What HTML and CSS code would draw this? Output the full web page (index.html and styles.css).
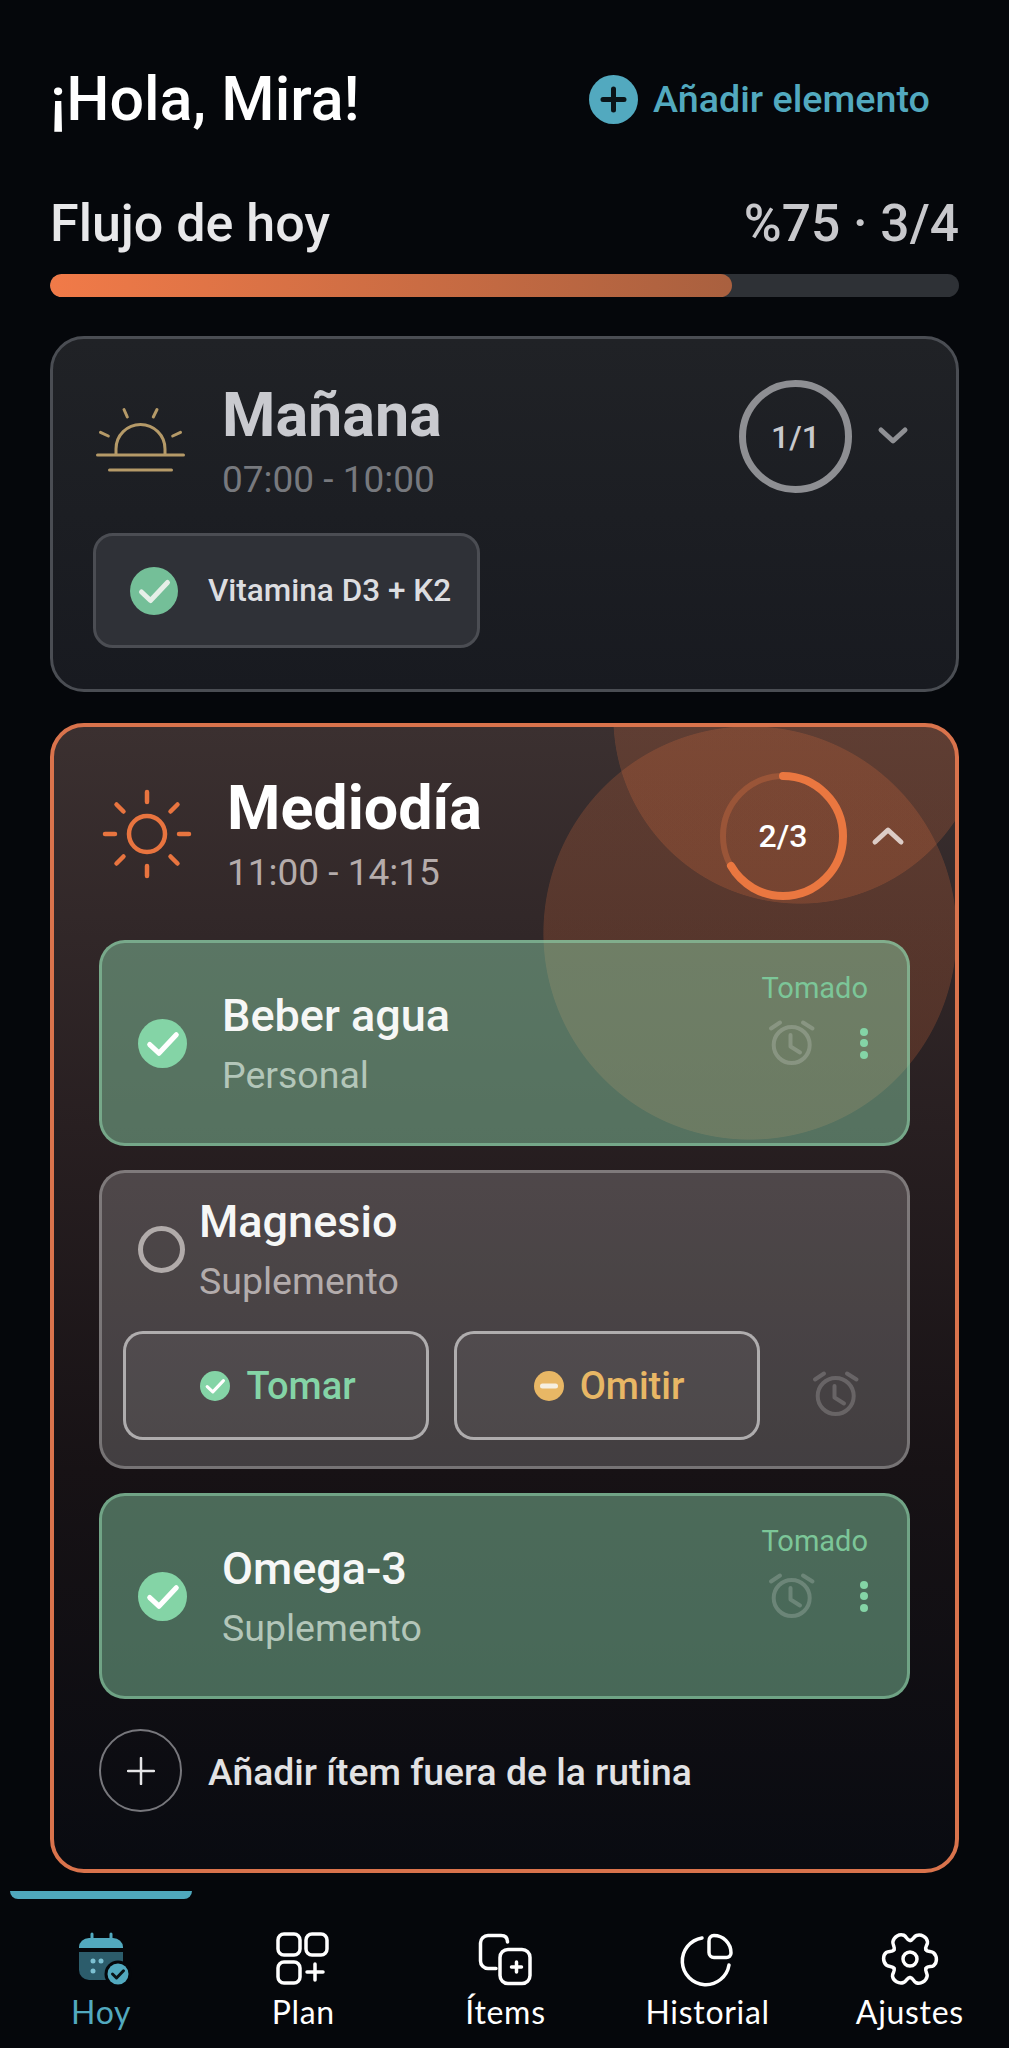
FILE: index.html
```html
<!DOCTYPE html>
<html lang="es">
<head>
<meta charset="utf-8">
<title>Flujo de hoy</title>
<link rel="stylesheet" href="styles.css">
</head>
<body>
<svg class="defs" width="0" height="0" aria-hidden="true">
  <symbol id="check" viewBox="0 0 48 48"><circle cx="24" cy="24" r="24" fill="currentColor"/><path d="M11.5 25 20.5 33.5 37.5 15.5" fill="none" stroke="var(--tick)" stroke-width="5" stroke-linecap="round" stroke-linejoin="round"/></symbol>
  <symbol id="alarm" viewBox="0 0 50 50"><g fill="none" stroke="currentColor" stroke-width="4" stroke-linecap="round" stroke-linejoin="round"><circle cx="24.7" cy="27" r="18"/><path d="M23.5 17V28.500L33 34.500M4 10.500 13 4.500M36 4.500 45.500 10.500"/></g></symbol>
</svg>
<div class="screen">
  <main class="main">
    <header class="top">
      <h1 class="hello">¡Hola, Mira!</h1>
      <div class="add">
        <svg class="add-ic" viewBox="0 0 49 49"><circle cx="24.5" cy="24.5" r="24.5" fill="#52a9bf"/><path d="M24.5 14V35M14 24.5H35" stroke="#0a1418" stroke-width="5" stroke-linecap="round"/></svg>
        <span>Añadir elemento</span>
      </div>
    </header>
    <div class="flow-row">
      <span class="flow-title">Flujo de hoy</span>
      <span class="flow-val">%75 · 3/4</span>
    </div>
    <div class="bar"><div class="bar-fill" style="width:75%"></div></div>

    <section class="card morning">
      <div class="head">
        <svg class="sunrise" viewBox="0 0 96 70"><g fill="none" stroke="#b59a68" stroke-width="3" stroke-linecap="round"><path d="M4.500 49H90.500M16.500 64H78.500M23 49V43a24.500 24.500 0 0 1 49 0V49M31 3.500 34.300 11M64 3.500 60.300 11M7.500 26.300 15.300 30M87.500 26.300 79.700 30"/></g></svg>
        <div class="titles">
          <h2 class="slot-title dim">Mañana</h2>
          <div class="slot-time dim">07:00 - 10:00</div>
        </div>
        <div class="ring-wrap">
          <div class="ring small">
            <svg viewBox="0 0 113 113"><circle cx="56.5" cy="56.5" r="53" fill="none" stroke="#8e8f93" stroke-width="7"/></svg>
            <span class="ring-txt dim">1/1</span>
          </div>
          <svg class="chev" viewBox="0 0 40 40"><path d="M8 13 20 24 32 13" fill="none" stroke="#8f9094" stroke-width="5" stroke-linecap="round" stroke-linejoin="round"/></svg>
        </div>
      </div>
      <div class="chip">
        <svg class="chip-check"><use href="#check"/></svg>
        <span>Vitamina D3 + K2</span>
      </div>
    </section>

    <section class="card noon">
      <div class="head noon-head">
        <svg class="sun" viewBox="0 0 96 96"><g fill="none" stroke="#e8743f" stroke-width="4.5" stroke-linecap="round"><circle cx="48" cy="48" r="18"/><path d="M48 6V16M48 80V90M6 48H16M80 48H90M17.500 18.500 24.500 25.500M78.500 18.500 71.500 25.500M17.500 77.500 24.500 70.500M78.500 77.500 71.500 70.500"/></g></svg>
        <div class="titles noon-titles">
          <h2 class="slot-title">Mediodía</h2>
          <div class="slot-time warm">11:00 - 14:15</div>
        </div>
        <div class="ring-wrap">
          <div class="ring big">
            <svg viewBox="0 0 128 128"><circle cx="64" cy="64" r="60" fill="none" stroke="#9a5538" stroke-width="6"/><circle class="ring-arc" cx="64" cy="64" r="60" fill="none" stroke="#ea7740" stroke-width="8" stroke-linecap="round" pathLength="100" stroke-dasharray="66.7 100"/></svg>
            <span class="ring-txt">2/3</span>
          </div>
          <svg class="chev" viewBox="0 0 40 40"><path d="M7 26 20 14 33 26" fill="none" stroke="#dcccc6" stroke-width="5" stroke-linecap="round" stroke-linejoin="round"/></svg>
        </div>
      </div>

      <div class="items">
        <article class="item done">
          <svg class="item-check"><use href="#check"/></svg>
          <div class="item-text">
            <div class="item-name">Beber agua</div>
            <div class="item-sub">Personal</div>
          </div>
          <div class="item-side">
            <span class="taken">Tomado</span>
            <div class="side-row">
              <svg class="alarm"><use href="#alarm"/></svg>
              <span class="dots"><i></i><i></i><i></i></span>
            </div>
          </div>
        </article>

        <article class="item open">
          <div class="open-top">
            <span class="radio"></span>
            <div class="item-text">
              <div class="item-name">Magnesio</div>
              <div class="item-sub">Suplemento</div>
            </div>
          </div>
          <div class="actions">
            <div class="btn take"><svg class="btn-ic"><use href="#check"/></svg><span>Tomar</span></div>
            <div class="btn skip"><svg class="btn-ic" viewBox="0 0 30 30"><circle cx="15" cy="15" r="15" fill="#e8b765"/><path d="M8.500 15H21.500" stroke="#f6efe0" stroke-width="5" stroke-linecap="round"/></svg><span>Omitir</span></div>
            <svg class="alarm"><use href="#alarm"/></svg>
          </div>
        </article>

        <article class="item done">
          <svg class="item-check"><use href="#check"/></svg>
          <div class="item-text">
            <div class="item-name">Omega-3</div>
            <div class="item-sub">Suplemento</div>
          </div>
          <div class="item-side">
            <span class="taken">Tomado</span>
            <div class="side-row">
              <svg class="alarm"><use href="#alarm"/></svg>
              <span class="dots"><i></i><i></i><i></i></span>
            </div>
          </div>
        </article>
      </div>

      <div class="extra">
        <span class="extra-ic"><svg viewBox="0 0 28 28"><path d="M14 1V27M1 14H27" stroke="#e6e6e8" stroke-width="2.500" stroke-linecap="round"/></svg></span>
        <span class="extra-txt">Añadir ítem fuera de la rutina</span>
      </div>
    </section>
  </main>

  <nav class="nav">
    <div class="nav-ind"></div>
    <div class="tabs">
      <div class="tab active">
        <svg class="tab-ic" viewBox="0 0 54 54"><path d="M5 16V15a10 9 0 0 1 10-9H39a10 9 0 0 1 10 9V16Z" fill="#52a9bf"/><path d="M18 2V7M37 2V7" stroke="#52a9bf" stroke-width="3" stroke-linecap="round"/><path d="M5 20H49V38a10 10 0 0 1-10 10H15A10 10 0 0 1 5 38Z" fill="#2c5c6b"/><circle cx="19" cy="29" r="2.500" fill="#7cc0d2"/><circle cx="27" cy="29" r="2.500" fill="#7cc0d2"/><circle cx="19" cy="39" r="2.500" fill="#7cc0d2"/><circle cx="44" cy="42" r="13.500" fill="#05070b"/><circle cx="44" cy="42" r="10.500" fill="#52a9bf"/><path d="M38.500 42 42.500 46 49.500 38.800" fill="none" stroke="#0a1418" stroke-width="3" stroke-linecap="round" stroke-linejoin="round"/></svg>
        <span>Hoy</span>
      </div>
      <div class="tab">
        <svg class="tab-ic" viewBox="0 0 54 54"><g fill="none" stroke="#fff" stroke-width="3.500" stroke-linecap="round"><rect x="2" y="2" width="22" height="21" rx="6"/><rect x="30" y="2" width="21" height="21" rx="6"/><rect x="2" y="30" width="22" height="21" rx="6"/><path d="M39 32V48M31 40H47"/></g></svg>
        <span>Plan</span>
      </div>
      <div class="tab">
        <svg class="tab-ic" viewBox="0 0 54 54"><g fill="none" stroke="#fff" stroke-width="3.500" stroke-linecap="round"><path d="M29.500 10C29.500 5.500 27 3.500 23 3.500H10A7.500 7.500 0 0 0 2.500 11V29A7.500 7.500 0 0 0 10 36.500H18"/><rect x="22" y="17.500" width="30" height="34" rx="8"/><path d="M38.500 30V40M33.500 35H43.500"/></g></svg>
        <span>Ítems</span>
      </div>
      <div class="tab">
        <svg class="tab-ic" viewBox="0 0 54 54"><g fill="none" stroke="#fff" stroke-width="3.500" stroke-linecap="round" stroke-linejoin="round"><path d="M21 6A23.500 23.500 0 1 0 48 33"/><path d="M28 9A5 5 0 0 1 33 3.500C42 3.500 50 11 50 21A4.500 4.500 0 0 1 45.500 25.500H33A5 5 0 0 1 28 20.500Z"/></g></svg>
        <span>Historial</span>
      </div>
      <div class="tab">
        <svg class="tab-ic" viewBox="0 0 54 54"><g fill="none" stroke="#fff" stroke-width="3.500" stroke-linecap="round" stroke-linejoin="round"><circle cx="27" cy="27" r="7"/><path id="lobe" d="M27 8.500C30 8.500 30.500 4.500 33.500 3.500C36.500 2.500 38.500 3.200 40.500 4.300C42.500 5.400 44 6.800 44.500 9.800C45 13 41.500 14.500 43 17.750"/><use href="#lobe" transform="rotate(60 27 27)"/><use href="#lobe" transform="rotate(120 27 27)"/><use href="#lobe" transform="rotate(180 27 27)"/><use href="#lobe" transform="rotate(240 27 27)"/><use href="#lobe" transform="rotate(300 27 27)"/></g></svg>
        <span>Ajustes</span>
      </div>
    </div>
  </nav>
</div>
</body>
</html>
```
FILE: styles.css
```css
* { box-sizing: border-box; }
html, body { margin: 0; padding: 0; }
body {
  width: 1009px;
  height: 2048px;
  overflow: hidden;
  background: #05070b;
  color: #fff;
  font-family: Roboto, "Liberation Sans", sans-serif;
}
h1, h2 { margin: 0; }
.defs { display: block; }
.screen { display: flex; flex-direction: column; height: 2048px; }
.main { padding: 64px 50px 0; }

.top { display: flex; align-items: center; justify-content: space-between; height: 70px; padding-right: 29px; }
.hello { font-size: 61px; font-weight: 500; line-height: 70px; }
.add { display: flex; align-items: center; gap: 15px; color: #52a9bf; font-size: 37.7px; font-weight: 500; }
.add-ic { width: 49px; height: 49px; }

.flow-row { display: flex; justify-content: space-between; align-items: center; height: 60px; margin-top: 60px; font-weight: 500; line-height: 60px; }
.flow-title { color: #e8e8ea; font-size: 52px; }
.flow-val { color: #c8c8cc; font-size: 51.500px; }
.bar { height: 23px; margin-top: 20px; background: #2e3136; border-radius: 12px; overflow: hidden; }
.bar-fill { height: 100%; border-radius: 12px; background: linear-gradient(90deg, #f17a48, #a9603f); }

.card { border-radius: 34px; border: 3px solid; }
.morning {
  margin-top: 39px;
  padding: 41px 43px 41px 40px;
  border-color: #4a4d53;
  background: linear-gradient(180deg, #202226, #181a20);
}
.head { display: flex; align-items: flex-start; }
.sunrise { width: 96px; height: 70px; margin-top: 26px; flex: none; }
.titles { margin-top: 5px; margin-left: 33px; }
.slot-title { font-size: 61px; font-weight: 700; line-height: 60px; color: #fff; }
.slot-title.dim { color: #c9cacf; }
.slot-time { font-size: 37px; line-height: 44px; margin-top: 13px; }
.slot-time.dim { color: #77797e; }
.slot-time.warm { color: #b5acab; }
.ring-wrap { margin-left: auto; display: flex; align-items: center; gap: 21px; }
.ring { display: grid; place-items: center; }
.ring > * { grid-area: 1 / 1; }
.ring.small, .ring.small svg { width: 113px; height: 113px; }
.ring.big, .ring.big svg { width: 128px; height: 128px; }
.ring-arc { transform: rotate(-90deg); transform-origin: 64px 64px; }
.ring-txt { font-size: 32px; font-weight: 500; color: #fff; }
.ring-txt.dim { color: #c8c9cc; }
.chev { width: 40px; height: 40px; flex: none; }

.chip {
  display: flex; align-items: center; gap: 30px;
  width: 387px; height: 115px;
  margin-top: 31px; padding-left: 34px;
  border: 3px solid #4b4d53; border-radius: 20px;
  background: #2f3137; color: #dcdde0;
  font-size: 31.500px; font-weight: 500;
}
.chip-check { width: 48px; height: 48px; color: #74bf98; --tick: #e6efe8; flex: none; }

.noon {
  margin-top: 31px;
  padding: 45px 45px 57px;
  border-width: 4px;
  border-color: #d9734c;
  background:
    radial-gradient(circle 207px at 696px 206px, rgba(238, 116, 62, .2) 99.6%, transparent 100%),
    radial-gradient(circle 187px at 746px -10px, rgba(238, 116, 62, .2) 99.6%, transparent 100%),
    linear-gradient(180deg, #3b3030 0%, #281f21 35%, #171215 65%, #090b11 100%);
}
.noon-head { height: 129px; }
.sun { width: 96px; height: 96px; margin-top: 14px; flex: none; }
.noon-titles { margin-top: 6px; margin-left: 32px; }
.noon .noon-titles .slot-time { margin-top: 13px; }
.noon .ring-wrap { margin-right: 2px; align-self: flex-start; }

.items { display: flex; flex-direction: column; gap: 24px; margin-top: 39px; }
.item { border: 3px solid; border-radius: 26px; }
.item.done {
  display: flex; align-items: center; height: 206px;
  padding: 0 39px 0 36px;
  background: rgba(143, 214, 172, .45);
  border-color: rgba(143, 214, 172, .55);
}
.item-check { width: 49px; height: 49px; color: #84d4a6; --tick: #fff; flex: none; }
.item-text { margin-left: 35px; padding-top: 2px; }
.item-name { font-size: 45px; font-weight: 500; line-height: 50px; color: #f6f7f6; }
.item-sub { font-size: 37.500px; line-height: 44px; margin-top: 12px; color: #b3c6b9; }
.item-side { margin-left: auto; align-self: flex-start; display: flex; flex-direction: column; align-items: flex-end; padding-top: 28px; }
.taken { font-size: 29px; line-height: 34px; color: #7cc698; }
.side-row { display: flex; align-items: center; margin-top: 13px; }
.alarm { width: 50px; height: 50px; color: rgba(255, 255, 255, .19); flex: none; }
.dots { display: flex; flex-direction: column; gap: 3.500px; margin-left: 43px; }
.dots i { display: block; width: 8px; height: 8px; border-radius: 50%; background: #84d4a6; }

.item.open {
  height: 299px; padding: 22px 21px 25px;
  background: rgba(255, 255, 255, .19);
  border-color: rgba(255, 255, 255, .28);
}
.open-top { display: flex; align-items: center; padding-left: 15px; }
.radio { width: 47px; height: 47px; border: 5px solid #b1abaa; border-radius: 50%; flex: none; }
.open .item-text { margin-left: 14px; }
.open .item-sub { color: #b3acac; }
.actions { display: flex; align-items: center; gap: 25px; margin-top: 28px; }
.btn {
  display: flex; align-items: center; justify-content: center; gap: 16px;
  width: 306px; height: 109px; padding-left: 4px;
  border: 3px solid rgba(255, 255, 255, .55); border-radius: 20px;
  background: rgba(255, 255, 255, .05);
  font-size: 38px; font-weight: 500;
}
.btn-ic { width: 30px; height: 30px; --tick: #fff; flex: none; }
.take { color: #84d4a6; }
.skip { color: #e8b765; }
.actions .alarm { margin: 16px 0 0 26px; }

.extra { display: flex; align-items: center; gap: 26px; margin-top: 30px; font-size: 37.300px; font-weight: 500; color: #e2e2e4; }
.extra-txt { padding-top: 2px; }
.extra-ic { width: 83px; height: 83px; display: grid; place-items: center; border: 2px solid #77777c; border-radius: 50%; flex: none; }
.extra-ic svg { width: 28px; height: 28px; }

.nav { margin-top: 18px; }
.nav-ind { width: 182px; height: 8px; margin-left: 10px; border-radius: 0 0 8px 8px; background: #4fa8bd; }
.tabs { display: grid; grid-template-columns: repeat(5, 202.2px); padding-top: 33px; }
.tab { display: flex; flex-direction: column; align-items: center; font-family: Lato, Roboto, sans-serif; font-size: 32px; letter-spacing: .7px; line-height: 40px; color: #fff; }
.tab.active { color: #52a9bf; }
.tab-ic { width: 54px; height: 54px; margin-bottom: 6px; overflow: visible; }
```
